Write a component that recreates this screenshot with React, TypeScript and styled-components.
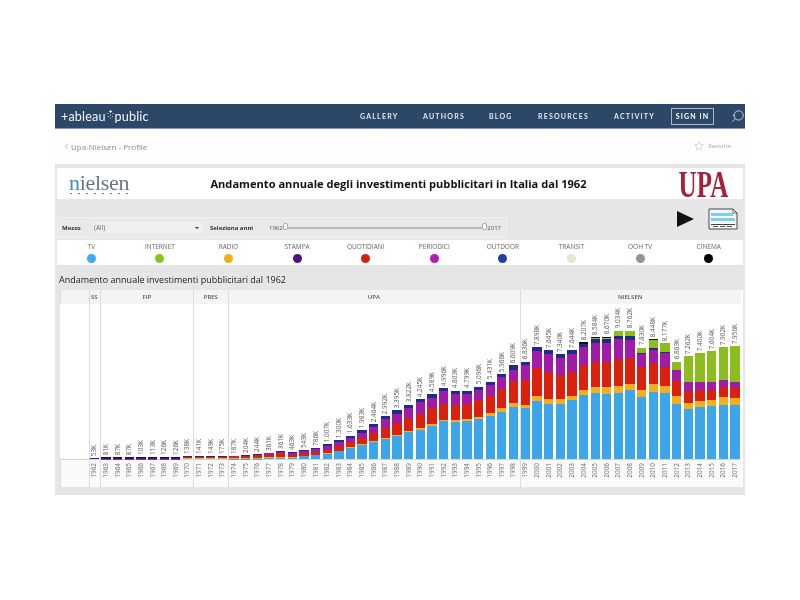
import React from "react";
import styled, { createGlobalStyle } from "styled-components";
import { ChevronLeft, Search, Star } from "lucide-react";

const GlobalStyle = createGlobalStyle`
  html, body {
    margin: 0;
    padding: 0;
    background: #fff;
    font-family: "Open Sans", "Liberation Sans", sans-serif;
  }
`;

const COLUMN = 11.65;

const Page = styled.div`
  width: 800px;
  height: 600px;
  box-sizing: border-box;
  padding: 104px 55px 0;
  overflow: hidden;
`;

const Window = styled.div`
  width: 690px;
  height: 391px;
  display: flex;
  flex-direction: column;
  filter: blur(0.6px);
`;

const NavBar = styled.div`
  height: 24px;
  flex: none;
  display: flex;
  align-items: center;
  background: #2d4768;
  border-bottom: 1px solid #8a99ab;
  color: #fff;
  padding-left: 6px;
`;

const Logo = styled.div`
  display: flex;
  align-items: center;
  width: 300px;
  font-family: Lato, sans-serif;
  font-size: 12.6px;
  letter-spacing: 0.15px;
  color: #f4f6f8;

  svg {
    margin: -4px 1px 0 1px;
  }
`;

const NavItem = styled.span<{ $width: number }>`
  width: ${p => p.$width}px;
  flex: none;
  font-family: Lato, sans-serif;
  font-size: 7px;
  font-weight: 700;
  letter-spacing: 1.2px;
  color: #e3e7ec;
`;

const SignIn = styled.span`
  width: 43px;
  height: 17px;
  box-sizing: border-box;
  flex: none;
  display: flex;
  align-items: center;
  justify-content: center;
  border: 1.5px solid #a9bacb;
  font-family: Lato, sans-serif;
  font-size: 7px;
  font-weight: 700;
  letter-spacing: 1.1px;
  color: #fff;
`;

const SearchIcon = styled(Search)`
  margin-left: 17px;
  flex: none;
  transform: scaleX(-1);
  color: #d7dee6;
`;

const SubBar = styled.div`
  height: 35px;
  flex: none;
  display: flex;
  align-items: center;
  justify-content: space-between;
  padding: 0 14px 0 7px;
  background: #fdfdfd;
`;

const BackLink = styled.div`
  display: flex;
  align-items: center;
  gap: 0;
  font-size: 8px;
  color: #8b8f94;
`;

const FavoriteLink = styled.div`
  display: flex;
  align-items: center;
  gap: 4px;
  font-size: 6px;
  color: #a5a8ab;
  margin-top: -2px;
`;

const Dashboard = styled.div`
  flex: 1;
  display: flex;
  flex-direction: column;
  padding: 4px 2px 0;
  background: #e6e6e6;
`;

const TitleStrip = styled.div`
  height: 31px;
  flex: none;
  display: grid;
  grid-template-columns: 1fr auto 1fr;
  align-items: center;
  padding: 0 15px 0 12px;
  background: #fff;
`;

const NielsenLogo = styled.div`
  display: flex;
  flex-direction: column;
  font-family: "Liberation Serif", serif;
  font-size: 22px;
  line-height: 20px;
  letter-spacing: -0.3px;
  color: #6c777d;

  b {
    font-weight: 400;
    color: #3d8fb8;
  }
`;

const NielsenDots = styled.div`
  width: 58px;
  display: flex;
  justify-content: space-between;
  padding-left: 1px;

  i {
    width: 1.5px;
    height: 1.5px;
    border-radius: 50%;
    background: #5f6b72;
  }
`;

const Title = styled.div`
  font-family: "Open Sans", sans-serif;
  font-size: 11.1px;
  font-weight: 700;
  color: #111;
  white-space: nowrap;
`;

const UpaLogo = styled.div`
  justify-self: end;
  font-family: "Liberation Serif", serif;
  font-size: 38px;
  font-weight: 700;
  line-height: 28px;
  color: #a61f3c;
  transform: scaleX(0.66);
  transform-origin: right center;
`;

const ControlsRow = styled.div`
  height: 39px;
  flex: none;
  display: flex;
  justify-content: space-between;
  align-items: flex-end;
`;

const FilterPanel = styled.div`
  width: 450px;
  height: 21px;
  box-sizing: border-box;
  display: flex;
  align-items: center;
  padding: 0 5px 0 4px;
  background: #e9e9e9;
  border: 1px solid #f1f1f1;
  font-size: 6px;
  color: #555;
`;

const FilterLabel = styled.span<{ $width: number }>`
  width: ${p => p.$width}px;
  flex: none;
  font-size: 6px;
  font-weight: 700;
  color: #333;
`;

const Select = styled.div`
  width: 110px;
  height: 11px;
  box-sizing: border-box;
  flex: none;
  display: flex;
  align-items: center;
  justify-content: space-between;
  padding: 0 4px 0 1px;
  margin-right: 7px;
  background: #efefef;
  font-size: 6.5px;
  color: #666;

  &::after {
    content: "";
    border-left: 2px solid transparent;
    border-right: 2px solid transparent;
    border-top: 2.5px solid #333;
  }
`;

const SliderValue = styled.span`
  flex: none;
  font-size: 6px;
  color: #555;
`;

const Track = styled.div`
  flex: 1;
  height: 2px;
  background: #b9b9b9;
`;

const Thumb = styled.div`
  width: 5px;
  height: 7px;
  box-sizing: border-box;
  flex: none;
  background: #fff;
  border: 1px solid #aaa;
  border-radius: 2px;
  margin-top: -3px;
`;

const Actions = styled.div`
  display: flex;
  align-items: center;
  gap: 14px;
  padding-right: 5px;
  margin-bottom: 8px;
`;

const PlayIcon = styled.div`
  width: 0;
  height: 0;
  border-left: 17px solid #111;
  border-top: 8.5px solid transparent;
  border-bottom: 8.5px solid transparent;
`;

const Legend = styled.div`
  height: 25px;
  flex: none;
  margin-top: 2px;
  display: grid;
  grid-template-columns: repeat(10, 1fr);
  background: #fff;
`;

const LegendItem = styled.div`
  display: flex;
  flex-direction: column;
  align-items: center;
  padding-top: 2px;
  gap: 3px;
  font-size: 6.5px;
  line-height: 9px;
  color: #666;
`;

const LegendDot = styled.span<{ $color: string }>`
  width: 9px;
  height: 9px;
  border-radius: 50%;
  background: ${p => p.$color};
`;

const ChartTitle = styled.div`
  height: 25px;
  flex: none;
  box-sizing: border-box;
  padding: 9px 0 0 2px;
  font-size: 9px;
  line-height: 12px;
  color: #222;
`;

const ChartFrame = styled.div`
  height: 197px;
  margin-left: 3px;
  flex: none;
  display: flex;
  background: #fff;
  color: #666;
`;

const Pane = styled.div<{ $count: number }>`
  width: ${p => p.$count * COLUMN}px;
  flex: none;
  display: flex;
  flex-direction: column;
  box-shadow: inset 1px 0 0 #dcdcdc;
`;

const Gutter = styled(Pane)`
  width: 28.5px;
  box-shadow: none;
`;

const PaneHeader = styled.div`
  height: 14px;
  flex: none;
  display: flex;
  align-items: center;
  justify-content: center;
  background: #f4f4f4;
  box-shadow: inset 1px 0 0 #dcdcdc;
  font-size: 6px;
  font-weight: 600;
  color: #555;
`;

const Plot = styled.div`
  height: 155px;
  flex: none;
  display: flex;
  align-items: flex-end;
  border-bottom: 1px solid #d4d4d4;
`;

const Years = styled.div`
  flex: 1;
  display: flex;
  align-items: flex-start;
  background: #fafafa;
  box-shadow: inset 1px 0 0 #dcdcdc;
`;

const BarColumn = styled.div`
  width: ${COLUMN}px;
  flex: none;
  display: flex;
  flex-direction: column;
  align-items: center;
`;

const Vertical = styled.span`
  writing-mode: vertical-rl;
  transform: rotate(180deg);
  font-size: 6.4px;
  line-height: 8px;
  white-space: nowrap;
  color: #5c5c5c;
`;

const ValueLabel = styled(Vertical)`
  margin-bottom: 2px;
`;

const YearLabel = styled(Vertical)`
  margin-top: 3px;
  color: #6e6e6e;
`;

const Bar = styled.div`
  width: 9.3px;
  display: flex;
  flex-direction: column-reverse;
`;

const Segment = styled.div<{ $color: string }>`
  background: ${p => p.$color};
`;

const segmentColors = ["#3da5ea", "#f2b01e", "#d9210e", "#a01ca8", "#1e2a8c", "#8cbd1f", "#111111"];

const legend = [
  ["TV", "#3fa9f0"],
  ["INTERNET", "#8cc31f"],
  ["RADIO", "#f3b014"],
  ["STAMPA", "#52107e"],
  ["QUOTIDIANI", "#d8200e"],
  ["PERIODICI", "#b01eb5"],
  ["OUTDOOR", "#1f3fa5"],
  ["TRANSIT", "#e2e8c8"],
  ["OOH TV", "#8a969e"],
  ["CINEMA", "#000000"],
];

// cumulative stack tops, 3 units = 1px
const early = [0, 0, 0, 1, 4, 4, 6];
const pres = [0, 2, 6, 7, 8, 8, 8];

const rows: [string, number[]][] = [
  ["53K", [0, 0, 0, 0, 2, 2, 3]],
  ["81K", early],
  ["87K", early],
  ["87K", early],
  ["103K", early],
  ["113K", early],
  ["126K", early],
  ["126K", early],
  ["138K", pres],
  ["141K", pres],
  ["149K", pres],
  ["175K", pres],
  ["187K", [1, 3, 8, 9, 10]],
  ["204K", [1, 3, 9, 10, 11]],
  ["244K", [1, 4, 11, 13, 14]],
  ["361K", [2, 5, 13, 17, 19]],
  ["361K", [4, 7, 17, 22, 24]],
  ["463K", [3, 5, 13, 18, 21]],
  ["543K", [8, 10, 18, 24, 27]],
  ["786K", [11, 13, 22, 30, 34]],
  ["1.007K", [16, 18, 28, 38, 44]],
  ["1.300K", [23, 25, 40, 50, 56]],
  ["1.633K", [33, 35, 51, 63, 70]],
  ["1.983K", [41, 44, 63, 78, 86]],
  ["2.464K", [50, 54, 78, 96, 105]],
  ["2.992K", [60, 64, 93, 120, 128]],
  ["3.395K", [68, 73, 108, 136, 146]],
  ["3.822K", [80, 83, 123, 153, 163]],
  ["4.245K", [88, 94, 136, 170, 180]],
  ["4.589K", [100, 106, 152, 184, 195]],
  ["4.996K", [113, 118, 166, 203, 213]],
  ["4.803K", [112, 118, 163, 194, 205]],
  ["4.799K", [114, 120, 165, 194, 205]],
  ["5.096K", [120, 127, 178, 206, 217]],
  ["5.431K", [130, 137, 190, 222, 232]],
  ["5.966K", [142, 152, 210, 245, 254]],
  ["6.609K", [157, 168, 233, 268, 282]],
  ["6.836K", [153, 163, 238, 281, 292]],
  ["7.898K", [173, 188, 273, 325, 336]],
  ["7.645K", [166, 180, 260, 315, 326]],
  ["7.340K", [166, 180, 252, 303, 314]],
  ["7.644K", [176, 190, 261, 316, 326]],
  ["8.207K", [193, 208, 282, 336, 345, 345, 350]],
  ["8.584K", [198, 216, 290, 348, 360, 362, 365]],
  ["8.670K", [195, 215, 290, 348, 361, 364, 367]],
  ["9.034K", [198, 218, 300, 360, 370, 383, 385]],
  ["8.762K", [206, 225, 303, 358, 368, 385, 385]],
  ["7.830K", [186, 208, 275, 316, 318, 334, 334]],
  ["8.448K", [202, 226, 288, 328, 333, 358, 360]],
  ["8.177K", [198, 220, 276, 318, 320, 348, 348]],
  ["6.863K", [166, 188, 233, 266, 268, 292, 292]],
  ["7.262K", [150, 168, 205, 232, 232, 308, 308]],
  ["7.400K", [156, 174, 208, 232, 232, 317, 317]],
  ["7.604K", [158, 176, 208, 232, 232, 323, 323]],
  ["7.902K", [163, 185, 216, 236, 238, 336, 336]],
  ["7.956K", [161, 184, 212, 232, 232, 339, 339]],
];

const panes = [
  { name: "SS", count: 1 },
  { name: "FIP", count: 8 },
  { name: "PRES", count: 3 },
  { name: "UPA", count: 25 },
  { name: "NIELSEN", count: 19 },
];

const TableauMark = () => (
  <svg width="7" height="9" viewBox="0 0 7 9" fill="#dfe5ec">
    <rect x="3" y="0" width="1" height="3" />
    <rect x="2" y="1" width="3" height="1" />
    <circle cx="0.8" cy="3.5" r="0.6" />
    <circle cx="6" cy="3.5" r="0.6" />
    <circle cx="3.5" cy="5" r="0.6" />
    <circle cx="1.4" cy="6.5" r="0.5" />
    <circle cx="5.4" cy="6.5" r="0.5" />
    <circle cx="3.5" cy="8" r="0.5" />
  </svg>
);

const DocIcon = () => (
  <svg width="30" height="22" viewBox="0 0 30 22">
    <path d="M1 1H25L29 5V21H1Z" fill="#f4f8fa" stroke="#3d4a52" strokeWidth="1" />
    <path d="M25 1V5H29" fill="none" stroke="#3d4a52" strokeWidth="0.8" />
    <rect x="3" y="5" width="22" height="3" fill="#7fd0e6" />
    <rect x="3" y="10" width="24" height="3" fill="#7fd0e6" />
    <rect x="3" y="16" width="24" height="1" fill="#444" />
    <rect x="5" y="18" width="5" height="1" fill="#555" />
    <rect x="12" y="18" width="5" height="1" fill="#555" />
    <rect x="19" y="18" width="5" height="1" fill="#555" />
  </svg>
);

const App: React.FC = () => {
  let start = 0;
  return (
    <Page>
      <GlobalStyle />
      <Window>
        <NavBar>
          <Logo>
            +ableau
            <TableauMark />
            public
          </Logo>
          <NavItem $width={63}>GALLERY</NavItem>
          <NavItem $width={66}>AUTHORS</NavItem>
          <NavItem $width={49}>BLOG</NavItem>
          <NavItem $width={76}>RESOURCES</NavItem>
          <NavItem $width={57}>ACTIVITY</NavItem>
          <SignIn>SIGN IN</SignIn>
          <SearchIcon size={14} strokeWidth={1.5} />
        </NavBar>
        <SubBar>
          <BackLink>
            <ChevronLeft size={9} strokeWidth={1.5} />
            Upa-Nielsen - Profile
          </BackLink>
          <FavoriteLink>
            <Star size={10} strokeWidth={1} />
            Favorite
          </FavoriteLink>
        </SubBar>
        <Dashboard>
          <TitleStrip>
            <NielsenLogo>
              <span>
                <b>n</b>ielsen
              </span>
              <NielsenDots>
                {Array.from({ length: 8 }, (_, i) => (
                  <i key={i} />
                ))}
              </NielsenDots>
            </NielsenLogo>
            <Title>Andamento annuale degli investimenti pubblicitari in Italia dal 1962</Title>
            <UpaLogo>UPA</UpaLogo>
          </TitleStrip>
          <ControlsRow>
            <FilterPanel>
              <FilterLabel $width={31}>Mezzo</FilterLabel>
              <Select>(All)</Select>
              <FilterLabel $width={59}>Seleziona anni</FilterLabel>
              <SliderValue>1962</SliderValue>
              <Thumb />
              <Track />
              <Thumb />
              <SliderValue>2017</SliderValue>
            </FilterPanel>
            <Actions>
              <PlayIcon />
              <DocIcon />
            </Actions>
          </ControlsRow>
          <Legend>
            {legend.map(([name, color]) => (
              <LegendItem key={name}>
                {name}
                <LegendDot $color={color} />
              </LegendItem>
            ))}
          </Legend>
          <ChartTitle>Andamento annuale investimenti pubblicitari dal 1962</ChartTitle>
          <ChartFrame>
            <Gutter $count={1}>
              <PaneHeader />
              <Plot />
              <Years />
            </Gutter>
            {panes.map(pane => {
              const first = start;
              start += pane.count;
              const items = rows.slice(first, start);
              return (
                <Pane key={pane.name} $count={pane.count}>
                  <PaneHeader>{pane.name}</PaneHeader>
                  <Plot>
                    {items.map(([label, tops], i) => (
                      <BarColumn key={first + i}>
                        <ValueLabel>{label}</ValueLabel>
                        <Bar>
                          {tops.map((top, s) => (
                            <Segment
                              key={s}
                              $color={segmentColors[s]}
                              style={{ height: (top - (s ? tops[s - 1] : 0)) / 3 }}
                            />
                          ))}
                        </Bar>
                      </BarColumn>
                    ))}
                  </Plot>
                  <Years>
                    {items.map((_, i) => (
                      <BarColumn key={first + i}>
                        <YearLabel>{1962 + first + i}</YearLabel>
                      </BarColumn>
                    ))}
                  </Years>
                </Pane>
              );
            })}
          </ChartFrame>
        </Dashboard>
      </Window>
    </Page>
  );
};

export default App;
